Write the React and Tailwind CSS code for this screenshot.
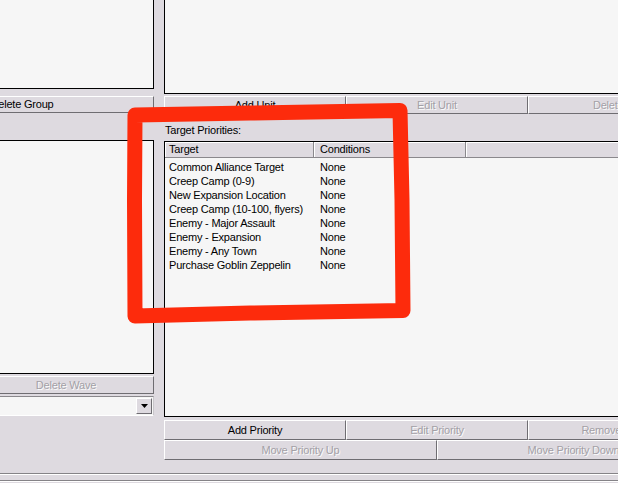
import React from "react";

const rows = [
  ["Common Alliance Target", "None"],
  ["Creep Camp (0-9)", "None"],
  ["New Expansion Location", "None"],
  ["Creep Camp (10-100, flyers)", "None"],
  ["Enemy - Major Assault", "None"],
  ["Enemy - Expansion", "None"],
  ["Enemy - Any Town", "None"],
  ["Purchase Goblin Zeppelin", "None"],
];

// classic 3D push button
const Btn = ({ children, disabled, className = "" }) => (
  <div
    className={`flex items-center justify-center shrink-0 border-t border-l border-t-white border-l-white border-r border-b border-r-[#6f6d72] border-b-[#6f6d72] bg-[#dedae0] whitespace-nowrap leading-[13px] ${
      disabled ? "text-[#a3a0a6] [text-shadow:1px_1px_0_#fbfbfb]" : "text-black"
    } ${className}`}
  >
    {children}
  </div>
);

const App = () => {
  return (
    <div className="relative w-[618px] h-[483px] overflow-hidden bg-[#dedae0] text-[11px] tracking-[-0.2px] text-black font-['Liberation_Sans',Arial,sans-serif]">
      <div className="flex h-[473px]">
        {/* ===== Left column ===== */}
        <div className="w-[154px] shrink-0 flex flex-col overflow-hidden">
          <div className="h-[89px] bg-[#f6f6f6] border-r border-b border-black" />
          <div className="mt-[7px] flex">
            <Btn className="ml-[-110px] w-[264px] h-[17px]">Delete Group</Btn>
          </div>
          <div className="mt-[27px] h-[234px] bg-[#f6f6f6] border-t border-r border-b border-black" />
          <div className="mt-[2px] flex">
            <Btn disabled className="ml-[-22px] w-[176px] h-[18px]">
              Delete Wave
            </Btn>
          </div>
          <div className="mt-[2px] h-[20px] flex items-center justify-end bg-[#f6f6f6] border-t border-t-[#8a888c] border-b border-b-white border-r border-r-[#c8c6ca] pr-[1px]">
            <div className="w-[16px] h-[16px] flex items-center justify-center bg-[#dedae0] border-t border-l border-t-white border-l-white border-r border-b border-r-[#6f6d72] border-b-[#6f6d72]">
              <svg width="7" height="4" viewBox="0 0 7 4">
                <path d="M0 0 H7 L3.5 4 Z" fill="#000" />
              </svg>
            </div>
          </div>
        </div>

        {/* gap between panels */}
        <div className="w-[10px] shrink-0" />

        {/* ===== Right column ===== */}
        <div className="w-[546px] shrink-0 flex flex-col">
          <div className="h-[94px] bg-[#f6f6f6] border-l border-b border-black" />
          <div className="mt-[2px] flex h-[18px]">
            <Btn className="w-[182px]">Add Unit</Btn>
            <Btn disabled className="w-[182px]">
              Edit Unit
            </Btn>
            <Btn disabled className="w-[182px]">
              Delete Unit
            </Btn>
          </div>
          <div className="h-[27px] pt-[10px] pl-[1px] leading-[13px]">
            Target Priorities:
          </div>

          {/* list view */}
          <div className="h-[276px] bg-[#f6f6f6] border-l border-t border-b border-black">
            <div className="flex h-[16px] bg-[#dedae0] leading-[15px]">
              <div className="w-[149px] pl-[4px] border-r border-r-[#8a888c] border-b border-b-[#8a888c] shadow-[inset_1px_1px_0_#ffffff]">
                Target
              </div>
              <div className="w-[152px] pl-[6px] border-r border-r-[#8a888c] border-b border-b-[#8a888c] shadow-[inset_1px_1px_0_#ffffff]">
                Conditions
              </div>
              <div className="flex-1 border-b border-b-[#8a888c] shadow-[inset_1px_1px_0_#ffffff]" />
            </div>
            <div className="pt-[2px]">
              {rows.map(([target, cond]) => (
                <div key={target} className="flex h-[14px] leading-[14px]">
                  <div className="w-[149px] pl-[4px] whitespace-nowrap">{target}</div>
                  <div className="pl-[6px]">{cond}</div>
                </div>
              ))}
            </div>
          </div>

          <div className="mt-[3px] flex h-[20px]">
            <Btn className="w-[182px]">Add Priority</Btn>
            <Btn disabled className="w-[182px]">
              Edit Priority
            </Btn>
            <Btn disabled className="w-[182px]">
              Remove Priority
            </Btn>
          </div>
          <div className="flex h-[20px]">
            <Btn disabled className="w-[273px]">
              Move Priority Up
            </Btn>
            <Btn disabled className="w-[273px]">
              Move Priority Down
            </Btn>
          </div>
        </div>
      </div>

      {/* bottom groove lines */}
      <div className="border-t border-t-[#858387] h-[7px] shadow-[inset_0_1px_0_#ffffff]" />
      <div className="border-t border-t-[#858387] h-[2px] shadow-[inset_0_1px_0_#ffffff]" />

      {/* hand-drawn red annotation */}
      <svg
        className="absolute left-0 top-0 pointer-events-none"
        width="618"
        height="483"
        viewBox="0 0 618 483"
      >
        <path
          d="M135 316 L134.5 200 L135 115 L250 113 L400 110.5 L402 200 L403 310.5 L250 313 L135 316 Z"
          fill="none"
          stroke="#fd2b0c"
          strokeWidth="15"
          strokeLinejoin="round"
          strokeLinecap="round"
        />
      </svg>
    </div>
  );
};

export default App;
